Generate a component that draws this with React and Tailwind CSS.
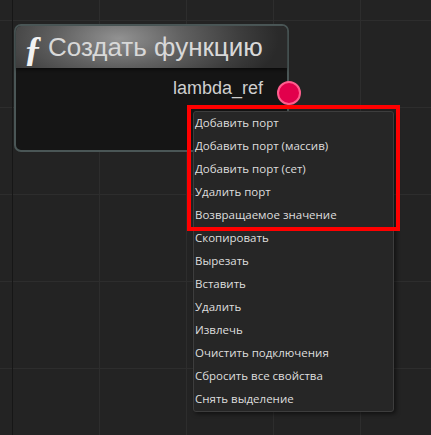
const menuItems = [
  'Добавить порт',
  'Добавить порт (массив)',
  'Добавить порт (сет)',
  'Удалить порт',
  'Возвращаемое значение',
  'Скопировать',
  'Вырезать',
  'Вставить',
  'Удалить',
  'Извлечь',
  'Очистить подключения',
  'Сбросить все свойства',
  'Снять выделение',
]

export default function App() {
  return (
    <div className="relative w-[431px] h-[435px] overflow-hidden bg-[#232323] bg-[linear-gradient(to_right,#2d2d2d_1px,transparent_1px),linear-gradient(to_bottom,#2d2d2d_1px,transparent_1px)] bg-[size:87px_87px] bg-[position:12px_20px]">
      {/* dark axis line */}
      <div className="absolute left-[12px] top-0 h-full w-px bg-[#161616]" />

      {/* node */}
      <div className="absolute left-[14px] top-[24px] w-[275px] h-[128px] rounded-[7px] border-2 border-[#4a5656] bg-[#151515]">
        <div className="h-[42px] rounded-t-[5px] flex items-center pl-[8px] gap-[6px] bg-[radial-gradient(ellipse_160px_70px_at_38%_30%,#929292_0%,#606060_40%,#3e3e3e_75%,#2a2a2a_100%)] shadow-[0_2px_3px_rgba(0,0,0,0.5)]">
          <span className="font-['Liberation_Serif',serif] italic font-bold text-[36px] leading-none text-[#f2f2f2] mt-[3px]">ƒ</span>
          <span className="font-['Liberation_Sans',sans-serif] text-[26px] leading-none text-[#d8d8d8]">Создать функцию</span>
        </div>
        <div className="flex justify-end pr-[24px] pt-[11px]">
          <span className="font-['Liberation_Sans',sans-serif] text-[18px] leading-none text-[#cfcfcf]">lambda_ref</span>
        </div>
        <div className="absolute right-[-14px] top-[55px] w-[24px] h-[24px] rounded-full bg-[#e2004c] border-[2px] border-[#ff5e8e]" />
      </div>

      {/* context menu */}
      <div className="absolute left-[193px] top-[111px] w-[201px] h-[301px] rounded-[3px] border border-[#3d3d3d] bg-[#262626] shadow-[2px_2px_4px_rgba(0,0,0,0.5)]">
        {menuItems.map((item) => (
          <div
            key={item}
            className="h-[23px] flex items-center pl-px pb-[2px] font-['Open_Sans',sans-serif] text-[11.5px] text-[#dedede]"
          >
            {item}
          </div>
        ))}
      </div>

      {/* highlight box */}
      <div className="absolute left-[187px] top-[105px] w-[213px] h-[126px] border-4 border-[#ff0000]" />
    </div>
  )
}
